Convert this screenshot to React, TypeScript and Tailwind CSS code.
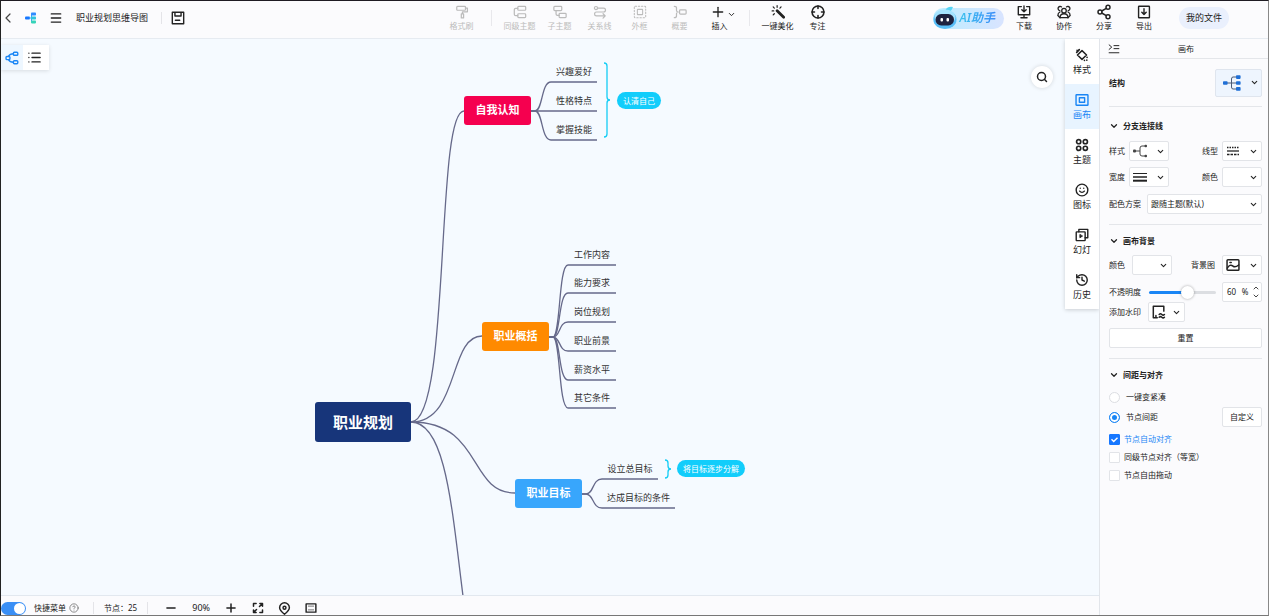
import { useState } from "react";
import type { ReactNode } from "react";
import {
  ChevronDown,
  ChevronLeft,
  ChevronUp,
  CircleHelp,
  List,
  Menu,
  Minus,
  Plus,
  Search,
  Smile,
  History,
  Share2,
} from "lucide-react";

// ---------- icons ----------

type IconProps = { children: ReactNode; className?: string; width?: number };

function Icon({ children, className = "size-[14px]", width = 1.4 }: IconProps) {
  return (
    <svg
      viewBox="0 0 16 16"
      fill="none"
      stroke="currentColor"
      strokeWidth={width}
      strokeLinecap="round"
      strokeLinejoin="round"
      className={className}
      aria-hidden="true"
    >
      {children}
    </svg>
  );
}

const icons = {
  brush: (
    <Icon>
      <rect x="2" y="1.5" width="10" height="4.5" rx="1" />
      <path d="M12 3.5h2.2v4.3H8.5v2.4M7.2 10.2h2.6v4.6H7.2z" />
    </Icon>
  ),
  sibling: (
    <Icon>
      <rect x="5.5" y="1.5" width="9" height="4.5" rx="1" />
      <rect x="5.5" y="10" width="9" height="4.5" rx="1" />
      <path d="M5.5 3.8H3.2q-1.7 0-1.7 1.7v5q0 1.7 1.7 1.7h2.3" />
    </Icon>
  ),
  child: (
    <Icon>
      <rect x="1" y="1.5" width="9" height="4.8" rx="1" />
      <rect x="7" y="9.5" width="8" height="4.8" rx="1" />
      <path d="M3.5 6.3v4q0 1.6 1.6 1.6H7" />
    </Icon>
  ),
  relation: (
    <Icon>
      <circle cx="3.4" cy="3.5" r="1.8" />
      <path d="M5.2 3.5H12q2.3 0 2.3 2.2T12 8H4Q1.8 8 1.8 10.2T4 12.5h9.5M11.5 10l2.5 2.5-2.5 2.5" />
    </Icon>
  ),
  frame: (
    <Icon width={1.2}>
      <rect x="1.5" y="1.5" width="13" height="13" rx="1" strokeDasharray="1.6 2" />
      <rect x="5" y="5" width="6" height="6" rx="0.5" />
    </Icon>
  ),
  summary: (
    <Icon>
      <path d="M1.5 1.5q2.5 0 2.5 2v2.8q0 1.7 2 1.7-2 0-2 1.7v2.8q0 2-2.5 2" />
      <rect x="7.5" y="5.5" width="7.5" height="5" rx="1" />
    </Icon>
  ),
  wand: (
    <Icon>
      <path d="M7 6.5l7.5 7.5" strokeWidth="3.2" />
      <path d="M7 .8v1.8M1.3 6.8h1.8M2.5 2.2l1.3 1.3M11.5 2.2l-1.3 1.3M3.8 10l-1.3 1.3" />
    </Icon>
  ),
  focus: (
    <Icon width={1.8}>
      <circle cx="8" cy="8" r="6.8" />
      <path d="M8 1.2v2.8M8 12v2.8M1.2 8H4M12 8h2.8" />
    </Icon>
  ),
  download: (
    <Icon width={1.6}>
      <path d="M5 1.8H1.5v9.4h13V1.8H11M8 1v6.5M5.5 5.3L8 7.8l2.5-2.5M8 11.2v3M4.5 14.5h7" />
    </Icon>
  ),
  team: (
    <Icon width={1.5}>
      <circle cx="8" cy="6.5" r="2.6" />
      <path d="M3.5 14.5q0-4.5 4.5-4.5t4.5 4.5z" />
      <path d="M5.2 2.2a2.4 2.4 0 1 0-2 4.2M1 12q0-3 2.4-4M10.8 2.2a2.4 2.4 0 1 1 2 4.2M15 12q0-3-2.4-4M3.5 14.5L1 12M12.5 14.5L15 12" />
    </Icon>
  ),
  exportBox: (
    <Icon width={1.6}>
      <rect x="1.8" y="1.5" width="12.4" height="13" rx="0.6" />
      <path d="M8 4.3v6.5M5.5 8.3L8 10.9l2.5-2.6" />
    </Icon>
  ),
  save: (
    <Icon width={1.6}>
      <path d="M1.5 1.5h13v13h-13zM4.5 1.5v4.2h7V1.5M5 10.5h5" />
    </Icon>
  ),
  mindmap: (
    <Icon width={1.6}>
      <rect x="9.6" y="1.5" width="5" height="3.4" rx="1" />
      <rect x="9.6" y="11.1" width="5" height="3.4" rx="1" />
      <rect x="1.2" y="6.2" width="4.4" height="3.6" rx="1" />
      <path d="M9.6 3.2Q5.500 3.2 4 6.2M9.6 12.800q-4.100 0-5.600-3" />
    </Icon>
  ),
  style: (
    <Icon width={1.7}>
      <path d="M8 3l5.200 5L8 13 2.800 8z" />
      <path d="M2.300 2.600h.01M4.900 1.800l-3 3.200M13.800 10.800v.01M13.500 13.900h.01M10.800 14.200h.01" strokeWidth="1.900" />
    </Icon>
  ),
  canvas: (
    <Icon width={1.6}>
      <rect x="1.2" y="2" width="13.6" height="12" rx="0.6" />
      <rect x="5" y="5.4" width="6" height="5.2" />
    </Icon>
  ),
  theme: (
    <Icon width={1.9}>
      <circle cx="4.2" cy="4.2" r="2.4" />
      <circle cx="11.8" cy="4.2" r="2.4" />
      <circle cx="4.2" cy="11.8" r="2.4" />
      <circle cx="11.8" cy="11.8" r="2.4" />
    </Icon>
  ),
  slides: (
    <Icon width={1.6}>
      <rect x="1.4" y="4.4" width="10.2" height="10" rx="0.6" />
      <path d="M4.4 4.4V1.6h10.2v9.6h-3" />
      <path d="M5.600 7.700v3.400l2.700-1.700z" fill="currentColor" strokeWidth="1" />
    </Icon>
  ),
  collapse: (
    <Icon className="size-3" width={1.3}>
      <path d="M1.5 2.5L5 5.5l-3.5 3M8 3.5h6.500M8 7.500h6.500M1.500 13h13" />
    </Icon>
  ),
  picture: (
    <Icon width={1.7}>
      <rect x="1.2" y="2" width="13.6" height="12" rx="1" />
      <path d="M1.5 11.500q3-5 6.500-2.200 2.500 2 6.500-1.300M4.500 5.200h1.500" />
    </Icon>
  ),
  watermark: (
    <Icon width={1.7}>
      <path d="M13.5 7V1.5h-12v13H6M4.5 14.5V12" />
      <path d="M8.2 10.8q1.5-1.5 3 0t3 0M8.2 14q1.5-1.5 3 0t3 0" />
    </Icon>
  ),
  expand: (
    <Icon className="size-3" width={2}>
      <path d="M2 5.5V2h3.5M10.5 2H14v3.5M14 10.5V14h-3.5M5.5 14H2v-3.5M10 6l3.5-3.5M6 10l-3.5 3.5" />
    </Icon>
  ),
  pin: (
    <Icon className="size-[13px]" width={1.8}>
      <path d="M8 15Q2 10 2 7a6 6 0 0 1 12 0q0 3-6 8z" />
      <circle cx="8" cy="7" r="1.8" />
    </Icon>
  ),
  minimap: (
    <Icon className="size-3" width={1.9}>
      <rect x="1.5" y="2.5" width="13" height="11" />
      <path d="M4.5 5.5h7M4.5 10.5h7" strokeWidth="0.8" />
    </Icon>
  ),
};

function Logo() {
  return (
    <svg viewBox="0 0 12 12" className="size-3" aria-hidden="true">
      <rect x="0" y="4.4" width="5" height="3.2" rx="1" fill="#1677ff" />
      <path d="M4 6h3M6.5 2.5v7" stroke="#36a3ff" />
      <rect x="6" y="0.6" width="5" height="3" rx="0.8" fill="#2f8bff" />
      <rect x="6" y="4.5" width="5" height="3" rx="0.8" fill="#2fc3dc" />
      <rect x="6" y="8.4" width="5" height="3" rx="0.8" fill="#35d3b8" />
    </svg>
  );
}

function Robot() {
  return (
    <svg viewBox="0 0 24 24" className="size-6" aria-hidden="true">
      <path d="M12 5Q14 0 20 1q-1 3-3 4.500z" fill="#56d5f5" />
      <ellipse cx="12" cy="13.500" rx="11.500" ry="9.500" fill="#58bdf7" />
      <ellipse cx="12" cy="11" rx="10.500" ry="7.500" fill="#a5e3ff" />
      <rect x="2.500" y="8" width="18.500" height="11.500" rx="5.700" fill="#1d2240" />
      <rect x="7.500" y="12" width="2.500" height="3.600" rx="1" fill="#fff" />
      <rect x="13.500" y="12" width="2.500" height="3.600" rx="1" fill="#fff" />
    </svg>
  );
}

// ---------- mind map data ----------

type Leaf = { text: string; x: number; y: number; w: number };
type Branch = {
  text: string;
  x: number;
  y: number;
  color: string;
  link: string;
  leaves: Leaf[];
};

const NODE_W = 67;
const NODE_H = 29;

const branches: Branch[] = [
  {
    text: "自我认知",
    x: 463,
    y: 57,
    color: "bg-[#f5004f]",
    link: "M410 383C450 383 434 72 463 72",
    leaves: [
      { text: "兴趣爱好", x: 550, y: 43, w: 46 },
      { text: "性格特点", x: 550, y: 72, w: 46 },
      { text: "掌握技能", x: 550, y: 101, w: 46 },
    ],
  },
  {
    text: "职业概括",
    x: 481,
    y: 283,
    color: "bg-[#ff8a00]",
    link: "M410 383C459 383 447 297 481 297",
    leaves: [
      { text: "工作内容", x: 567, y: 226, w: 48 },
      { text: "能力要求", x: 567, y: 254, w: 48 },
      { text: "岗位规划", x: 567, y: 283, w: 48 },
      { text: "职业前景", x: 567, y: 312, w: 48 },
      { text: "薪资水平", x: 567, y: 341, w: 48 },
      { text: "其它条件", x: 567, y: 369, w: 48 },
    ],
  },
  {
    text: "职业目标",
    x: 514,
    y: 440,
    color: "bg-[#38a6fc]",
    link: "M410 383C482 383 467 454 514 454",
    leaves: [
      { text: "设立总目标", x: 601, y: 440, w: 56 },
      { text: "达成目标的条件", x: 601, y: 469, w: 73 },
    ],
  },
];

const summaries = [
  { text: "认清自己", x: 616, y: 53, brace: "M603 24q3 0 3 3v31q0 3 3 3-3 0-3 3v31q0 3-3 3" },
  { text: "将目标逐步分解", x: 676, y: 421, brace: "M664 421q3 0 3 3v3q0 3 3 3-3 0-3 3v3q0 3-3 3" },
];

function leafPath(b: Branch, l: Leaf) {
  const x = b.x + NODE_W;
  const y = b.y + 15;
  const m = (x + 4 + l.x) / 2;
  return `M${x} ${y}h4C${m} ${y} ${m - 2} ${l.y} ${l.x} ${l.y}h${l.w}`;
}

function MindMap() {
  return (
    <>
      <svg className="absolute inset-0 size-full" fill="none" strokeWidth="1.3" aria-hidden="true">
        <g stroke="#66698a">
          {branches.map((b) => (
            <path key={b.text} d={b.link} />
          ))}
          <path d="M410 383C445 383 451 471 462 557" />
          {branches.map((b) => b.leaves.map((l) => <path key={l.text} d={leafPath(b, l)} />))}
        </g>
        {summaries.map((s) => (
          <path key={s.text} d={s.brace} stroke="#14cdf5" />
        ))}
      </svg>

      <div className="absolute left-[314px] top-[363px] flex h-10 w-24 items-center justify-center rounded-[3px] bg-[#17357a] text-[15px] font-bold text-white">
        职业规划
      </div>

      {branches.map((b) => (
        <div key={b.text}>
          <div
            className={`absolute flex items-center justify-center rounded-[3px] text-[11px] font-bold text-white ${b.color}`}
            style={{ left: b.x, top: b.y, width: NODE_W, height: NODE_H }}
          >
            {b.text}
          </div>
          {b.leaves.map((l) => (
            <div
              key={l.text}
              className="absolute flex h-5 items-center justify-center whitespace-nowrap text-[9px] text-[#333]"
              style={{ left: l.x, top: l.y - 20, width: l.w }}
            >
              {l.text}
            </div>
          ))}
        </div>
      ))}

      {summaries.map((s) => (
        <div
          key={s.text}
          className="absolute flex h-[17px] items-center whitespace-nowrap rounded-full bg-[#12cdfb] px-[6px] text-[8px] text-white"
          style={{ left: s.x, top: s.y }}
        >
          {s.text}
        </div>
      ))}
    </>
  );
}

// ---------- header ----------

function ToolButton({ icon, label, disabled }: { icon: ReactNode; label: string; disabled?: boolean }) {
  return (
    <button
      disabled={disabled}
      className="flex w-10 flex-col items-center gap-[2px] whitespace-nowrap text-[8px] leading-[10px] text-[#222] disabled:text-[#bbb]"
    >
      <span className="flex h-[14px] items-center">{icon}</span>
      {label}
    </button>
  );
}

function Header() {
  return (
    <header className="flex h-[38px] shrink-0 items-center border-b border-[#e6ebf1] bg-[#fbfbfd] pb-[3px]">
      <div className="flex flex-1 items-center">
        <button aria-label="返回" className="text-[#444]">
          <ChevronLeft className="-ml-px size-4" strokeWidth={1.8} />
        </button>
        <div className="ml-[9px]">
          <Logo />
        </div>
        <button aria-label="菜单" className="ml-3 text-[#222]">
          <Menu className="size-[14px]" strokeWidth={2.4} />
        </button>
        <h1 className="ml-[13px] whitespace-nowrap text-[9px] text-[#222]">职业规划思维导图</h1>
        <div className="ml-[13px] mr-[9px] h-3 w-px bg-[#e4e4e8]" />
        <button aria-label="保存" className="text-[#222]">
          {icons.save}
        </button>
      </div>

      <div className="flex items-center pl-[10px]">
        <ToolButton icon={icons.brush} label="格式刷" disabled />
        <div className="ml-[9px] mr-2 h-4 w-px bg-[#e8e8ec]" />
        <ToolButton icon={icons.sibling} label="同级主题" disabled />
        <ToolButton icon={icons.child} label="子主题" disabled />
        <ToolButton icon={icons.relation} label="关系线" disabled />
        <ToolButton icon={icons.frame} label="外框" disabled />
        <ToolButton icon={icons.summary} label="概要" disabled />
        <ToolButton
          icon={
            <span className="flex items-center pl-[6px]">
              <Plus className="size-4" strokeWidth={2} />
              <ChevronDown className="ml-px mt-1 size-[9px]" strokeWidth={2.5} />
            </span>
          }
          label="插入"
        />
        <div className="ml-[9px] mr-2 h-4 w-px bg-[#e8e8ec]" />
        <ToolButton icon={icons.wand} label="一键美化" />
        <ToolButton icon={icons.focus} label="专注" />
      </div>

      <div className="flex flex-1 items-center justify-end">
        <button className="flex h-[21px] items-center rounded-full bg-linear-to-r from-[#b9ecff] to-[#d9e4ff] pr-2 text-[12px] font-semibold italic">
          <Robot />
          <span className="bg-linear-to-r from-[#3cc4ec] to-[#3a8cf8] bg-clip-text pl-[2px] pr-px text-transparent">
            AI助手
          </span>
        </button>
        <ToolButton icon={icons.download} label="下载" />
        <ToolButton icon={icons.team} label="协作" />
        <ToolButton icon={<Share2 className="size-4" strokeWidth={2.2} />} label="分享" />
        <ToolButton icon={icons.exportBox} label="导出" />
        <button className="ml-[15px] mr-[39px] h-[22px] whitespace-nowrap rounded-full bg-[#eaf0fd] px-[7px] text-[9px] text-[#222]">
          我的文件
        </button>
      </div>
    </header>
  );
}

// ---------- side tabs ----------

const tabs = [
  { label: "样式", icon: icons.style },
  { label: "画布", icon: icons.canvas },
  { label: "主题", icon: icons.theme },
  { label: "图标", icon: <Smile className="size-[14px]" strokeWidth={2.4} /> },
  { label: "幻灯", icon: icons.slides },
  { label: "历史", icon: <History className="size-[14px]" strokeWidth={2.4} /> },
];

function SideTabs() {
  const [active, setActive] = useState("画布");
  return (
    <nav className="absolute right-0 top-0 w-[34px] bg-white shadow-[0_1px_4px_rgba(0,0,0,0.18)]">
      {tabs.map((t) => (
        <button
          key={t.label}
          onClick={() => setActive(t.label)}
          className={`flex h-[45px] w-full flex-col items-center justify-center gap-[2px] text-[9px] leading-[11px] ${
            active === t.label ? "bg-[#e8f4ff] text-[#1a86f5]" : "text-[#222]"
          }`}
        >
          {t.icon}
          {t.label}
        </button>
      ))}
    </nav>
  );
}

// ---------- right panel ----------

function IconSelect({ label, icon, className = "h-5 w-10" }: { label: string; icon?: ReactNode; className?: string }) {
  return (
    <div className={`relative shrink-0 ${className}`}>
      <select
        aria-label={label}
        className="size-full appearance-none rounded-[2px] border border-[#e2e4e8] bg-white"
      >
        <option value="default" aria-label="默认" />
      </select>
      <span className="pointer-events-none absolute inset-0 flex items-center justify-between px-1 text-[#222]">
        <span>{icon}</span>
        <ChevronDown className="size-[9px]" strokeWidth={2.8} />
      </span>
    </div>
  );
}

function Section({ title, className = "pt-[7px]", children }: { title: string; className?: string; children: ReactNode }) {
  return (
    <section className={`border-t border-[#e4e6ea] ${className}`}>
      <h2 className="flex h-[18px] items-center gap-1 text-[8px] font-bold text-[#222]">
        <ChevronDown className="size-[10px]" strokeWidth={3} />
        {title}
      </h2>
      {children}
    </section>
  );
}

const lineStyleIcon = (
  <svg viewBox="0 0 14 14" className="size-[14px]" fill="none" stroke="#444" aria-hidden="true">
    <path d="M2 7h5M12 2H9Q7 2 7 4v6q0 2 2 2h3" />
    <g fill="#444" stroke="none">
      <rect x="0" y="5.5" width="3" height="3" rx="1" />
      <rect x="11.5" y="0.8" width="2.5" height="2.5" rx="1" />
      <rect x="11.5" y="10.7" width="2.5" height="2.5" rx="1" />
    </g>
  </svg>
);

const dashIcon = (
  <svg viewBox="0 0 14 10" className="h-[10px] w-[14px]" stroke="#222" strokeWidth="1.3" aria-hidden="true">
    <path d="M1 1.5h12" strokeDasharray="1.5 1" />
    <path d="M1 5h12" />
    <path d="M1 8.5h12" strokeDasharray="2.5 1" />
  </svg>
);

const widthIcon = (
  <svg viewBox="0 0 14 10" className="h-[10px] w-[14px]" stroke="#222" aria-hidden="true">
    <path d="M0 1.5h14" strokeWidth="1" />
    <path d="M0 5h14" strokeWidth="1.5" />
    <path d="M0 8.7h14" strokeWidth="2" />
  </svg>
);

const structureIcon = (
  <svg viewBox="0 0 18 16" className="h-4 w-[18px]" fill="none" aria-hidden="true">
    <path d="M3 8h10M13 2h-3Q8.5 2 8.5 4v8q0 2 1.5 2h3" stroke="#4a5a75" />
    <g fill="#1f6fd6">
      <rect x="0" y="6.2" width="4.6" height="3.6" rx="0.8" />
      <rect x="13" y="0.3" width="4.6" height="3.6" rx="0.8" />
      <rect x="13" y="6.2" width="4.6" height="3.6" rx="0.8" />
      <rect x="13" y="12.1" width="4.6" height="3.6" rx="0.8" />
    </g>
  </svg>
);

function Panel() {
  const [opacity, setOpacity] = useState(60);
  const [spacing, setSpacing] = useState("spacing");

  return (
    <aside className="w-[169px] shrink-0 border-l border-[#e2e5ea] bg-[#fbfbfd] text-[8px] leading-[12px] text-[#222]">
      <div className="relative flex h-5 items-center justify-center border-b border-[#e4e6ea] pl-1">
        <button aria-label="收起" className="absolute left-2">
          {icons.collapse}
        </button>
        <h2>画布</h2>
      </div>

      <div className="pl-[9px] pr-[6px]">
        <div className="flex h-[47px] items-center justify-between font-bold">
          结构
          <div className="relative h-7 w-[47px]">
            <select
              aria-label="结构"
              className="size-full appearance-none rounded-[2px] border border-[#dfe5ee] bg-[#eef5fe]"
            >
              <option value="right" aria-label="右侧" />
            </select>
            <span className="pointer-events-none absolute inset-0 flex items-center justify-between pl-2 pr-[3px]">
              {structureIcon}
              <ChevronDown className="size-[9px]" strokeWidth={2.8} />
            </span>
          </div>
        </div>

        <Section title="分支连接线" className="pt-[10px]">
          <div className="mt-[6px] flex items-center justify-between">
            <span className="flex items-center gap-1">
              样式
              <IconSelect label="连接线样式" icon={lineStyleIcon} />
            </span>
            <span className="flex items-center gap-1">
              线型
              <IconSelect label="线型" icon={dashIcon} />
            </span>
          </div>
          <div className="mt-[6px] flex items-center justify-between">
            <span className="flex items-center gap-1">
              宽度
              <IconSelect label="宽度" icon={widthIcon} />
            </span>
            <span className="flex items-center gap-1">
              颜色
              <IconSelect label="连接线颜色" />
            </span>
          </div>
          <div className="mb-[10px] mt-[7px] flex items-center gap-[6px]">
            <label htmlFor="scheme" className="shrink-0">
              配色方案
            </label>
            <div className="relative flex-1">
              <select
                id="scheme"
                className="h-5 w-full appearance-none rounded-[2px] border border-[#e2e4e8] bg-white pl-[3px] text-[8px]"
              >
                <option>跟随主题(默认)</option>
              </select>
              <ChevronDown
                className="pointer-events-none absolute right-1 top-[6px] size-[9px]"
                strokeWidth={2.8}
              />
            </div>
          </div>
        </Section>

        <Section title="画布背景">
          <div className="mt-[5px] flex items-center justify-between">
            <span className="flex items-center gap-[7px]">
              颜色
              <IconSelect label="背景颜色" />
            </span>
            <span className="flex items-center gap-[7px]">
              背景图
              <IconSelect label="背景图" icon={icons.picture} />
            </span>
          </div>
          <div className="mt-[7px] flex items-center">
            <label htmlFor="opacity" className="w-10 shrink-0">
              不透明度
            </label>
            <input
              id="opacity"
              type="range"
              value={opacity}
              onChange={(e) => setOpacity(Number(e.target.value))}
              className="h-[3px] w-[67px] appearance-none rounded-full [&::-webkit-slider-thumb]:size-[13px] [&::-webkit-slider-thumb]:appearance-none [&::-webkit-slider-thumb]:rounded-full [&::-webkit-slider-thumb]:bg-white [&::-webkit-slider-thumb]:shadow-[0_0_3px_rgba(0,0,0,0.35)]"
              style={{
                background: `linear-gradient(to right, #1a86f5 ${opacity}%, #dcdee2 ${opacity}%)`,
              }}
            />
            <div className="ml-auto flex h-5 w-10 items-center justify-between rounded-[2px] border border-[#e2e4e8] bg-white pl-1 pr-px">
              <input
                aria-label="不透明度数值"
                value={opacity}
                onChange={(e) => setOpacity(Number(e.target.value) || 0)}
                className="w-[11px]"
              />
              %
              <span className="flex flex-col">
                <button aria-label="增加" onClick={() => setOpacity(Math.min(100, opacity + 1))}>
                  <ChevronUp className="size-2" strokeWidth={2.5} />
                </button>
                <button aria-label="减少" onClick={() => setOpacity(Math.max(0, opacity - 1))}>
                  <ChevronDown className="size-2" strokeWidth={2.5} />
                </button>
              </span>
            </div>
          </div>
          <div className="flex items-center gap-[7px]">
            添加水印
            <IconSelect label="添加水印" icon={icons.watermark} className="h-5 w-[37px]" />
          </div>
          <button className="mb-[10px] mt-[6px] h-5 w-full rounded-[2px] border border-[#e2e4e8] bg-white">
            重置
          </button>
        </Section>

        <Section title="间距与对齐">
          <div className="mt-[3px] flex h-5 items-center">
            <label className="flex items-center gap-[6px]">
              <Radio checked={spacing === "compact"} onChange={() => setSpacing("compact")} />
              一键变紧凑
            </label>
          </div>
          <div className="flex h-5 items-center justify-between">
            <label className="flex items-center gap-[6px]">
              <Radio checked={spacing === "spacing"} onChange={() => setSpacing("spacing")} />
              节点间距
            </label>
            <button className="h-5 w-10 rounded-[2px] border border-[#e2e4e8] bg-white">自定义</button>
          </div>
          <div className="mt-[6px] flex flex-col gap-[6px]">
            <Check label="节点自动对齐" defaultChecked />
            <Check label="同级节点对齐（等宽）" />
            <Check label="节点自由拖动" />
          </div>
        </Section>
      </div>
    </aside>
  );
}

function Radio({ checked, onChange }: { checked: boolean; onChange: () => void }) {
  return (
    <input
      type="radio"
      name="spacing"
      checked={checked}
      onChange={onChange}
      className="size-[11px] appearance-none rounded-full border border-[#dcdee2] bg-white checked:border-[#1a86f5] checked:bg-[#1a86f5] checked:shadow-[inset_0_0_0_2px_white]"
    />
  );
}

function Check({ label, defaultChecked }: { label: string; defaultChecked?: boolean }) {
  return (
    <label className="flex items-center gap-1 whitespace-nowrap has-checked:text-[#1a86f5]">
      <span className="relative flex">
        <input
          type="checkbox"
          defaultChecked={defaultChecked}
          className="peer size-[11px] appearance-none rounded-[1px] border border-[#e2e4e8] bg-white checked:border-[#1677ff] checked:bg-[#1677ff]"
        />
        <svg
          viewBox="0 0 11 11"
          className="pointer-events-none absolute inset-0 hidden size-[11px] peer-checked:block"
          fill="none"
          stroke="white"
          strokeWidth="1.4"
          aria-hidden="true"
        >
          <path d="M2.5 5.3l2.2 2.2 3.8-3.8" />
        </svg>
      </span>
      {label}
    </label>
  );
}

// ---------- footer ----------

function Footer() {
  const [zoom, setZoom] = useState(90);
  return (
    <footer className="flex h-5 shrink-0 items-center border-t border-[#e2e8ef] bg-[#fbfbfd] pt-[5px] text-[8px] text-[#222]">
      <label className="flex items-center gap-2 whitespace-nowrap">
        <input
          type="checkbox"
          role="switch"
          defaultChecked
          className="h-[13px] w-[25px] appearance-none rounded-full bg-[#c8ccd2] before:m-px before:block before:size-[11px] before:rounded-full before:bg-white checked:bg-[#3a8ff5] checked:before:ml-[13px]"
        />
        快捷菜单
      </label>
      <CircleHelp className="ml-[3px] size-[10px] text-[#666]" strokeWidth={1.8} />
      <div className="ml-[14px] mr-[10px] h-3 w-px bg-[#e4e4e8]" />
      <span className="whitespace-nowrap">节点：25</span>
      <div className="ml-[10px] mr-4 h-3 w-px bg-[#e4e4e8]" />
      <button aria-label="缩小" onClick={() => setZoom(zoom - 10)}>
        <Minus className="size-[14px]" strokeWidth={2.6} />
      </button>
      <span className="w-[46px] text-center text-[9px]">{zoom}%</span>
      <button aria-label="放大" onClick={() => setZoom(zoom + 10)}>
        <Plus className="size-[14px]" strokeWidth={2.6} />
      </button>
      <div className="ml-[14px] flex items-center gap-[14px]">
        <button aria-label="全屏">{icons.expand}</button>
        <button aria-label="定位">{icons.pin}</button>
        <button aria-label="导航">{icons.minimap}</button>
      </div>
    </footer>
  );
}

export default function App() {
  return (
    <div className="flex h-screen flex-col overflow-hidden border border-b-[#777] border-l-[#222] border-r-[#888] border-t-[#1e1b22] font-['Noto_Sans','Noto_Sans_CJK_SC',sans-serif]">
      <Header />
      <div className="flex min-h-0 flex-1">
        <div className="flex min-w-0 flex-1 flex-col">
          <main className="relative min-h-0 flex-1 overflow-hidden bg-[#f5faff]">
            <MindMap />

            <div className="absolute left-0 top-[6px] flex h-[25px] w-12 bg-white shadow-[0_1px_4px_rgba(0,0,0,0.12)]">
              <button aria-label="导图视图" className="flex flex-1 items-center justify-center bg-[#eef7ff] text-[#1a86f5]">
                {icons.mindmap}
              </button>
              <button aria-label="大纲视图" className="flex flex-1 items-center justify-center pr-1 text-[#222]">
                <List className="size-[15px]" strokeWidth={2.2} />
              </button>
            </div>

            <button
              aria-label="搜索"
              className="absolute right-[46px] top-[27px] flex size-[22px] items-center justify-center rounded-full bg-white text-[#222] shadow-[0_0_4px_rgba(0,0,0,0.15)]"
            >
              <Search className="size-3" strokeWidth={3} />
            </button>

            <SideTabs />
          </main>
          <Footer />
        </div>
        <Panel />
      </div>
    </div>
  );
}
